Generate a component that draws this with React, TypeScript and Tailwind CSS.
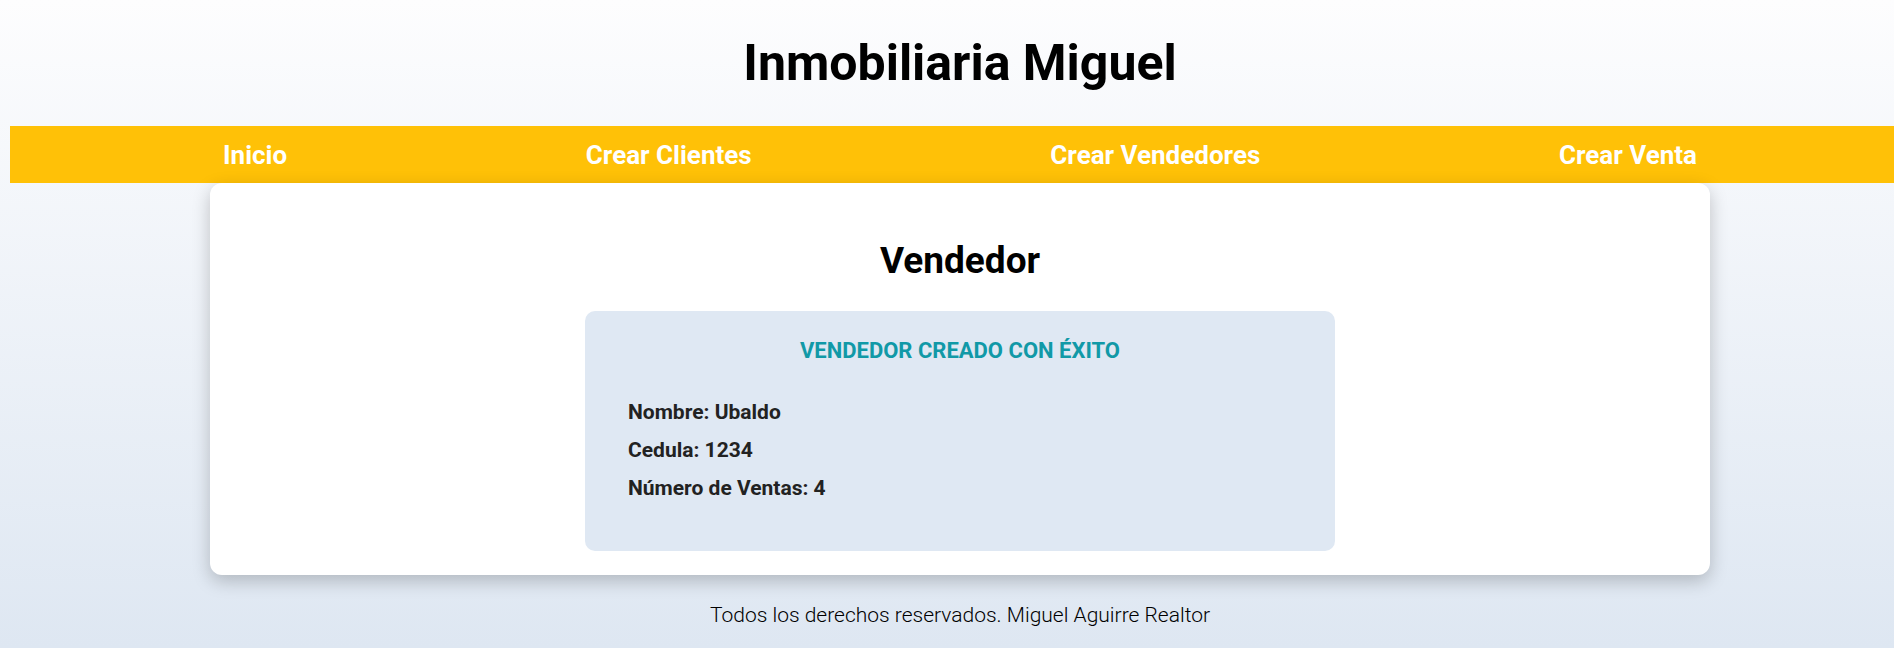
import React from 'react';

const links = ['Inicio', 'Crear Clientes', 'Crear Vendedores', 'Crear Venta'];

export default function App() {
  return (
    <div className="min-h-screen bg-gradient-to-b from-[#fdfdfe] to-[#dee7f2] pl-[10px] font-['Roboto',sans-serif] text-black">
      <header className="flex h-[126px] items-center justify-center pl-[16px]">
        <h1 className="text-[50px] font-bold leading-none">Inmobiliaria Miguel</h1>
      </header>

      <nav className="flex h-[57px] items-center justify-between bg-[#ffc107] pl-[213px] pr-[197px]">
        {links.map((label) => (
          <a key={label} href="#" className="text-[26px] font-bold leading-none text-white">
            {label}
          </a>
        ))}
      </nav>

      <div className="ml-[200px] w-[1500px]">
        <main className="rounded-xl bg-white pt-[59px] pb-[24px] shadow-[0_6px_18px_rgba(0,0,0,0.22)]">
          <h2 className="text-center text-[37px] font-bold leading-none">Vendedor</h2>

          <section className="mx-auto mt-[32px] w-[750px] rounded-[10px] bg-[#dfe8f3] pt-[29px] pb-[44px] pl-[43px]">
            <h3 className="pr-[43px] text-center text-[22px] font-bold uppercase leading-none text-[#1199a7]">
              Vendedor creado con éxito
            </h3>
            <div className="mt-[31px] text-[21px] font-bold leading-[38px] text-[#222]">
              <p>Nombre: Ubaldo</p>
              <p>Cedula: 1234</p>
              <p>Número de Ventas: 4</p>
            </div>
          </section>
        </main>

        <footer className="mt-[30px] text-center text-[21px] font-light leading-none text-black">
          Todos los derechos reservados. Miguel Aguirre Realtor
        </footer>
      </div>
    </div>
  );
}
